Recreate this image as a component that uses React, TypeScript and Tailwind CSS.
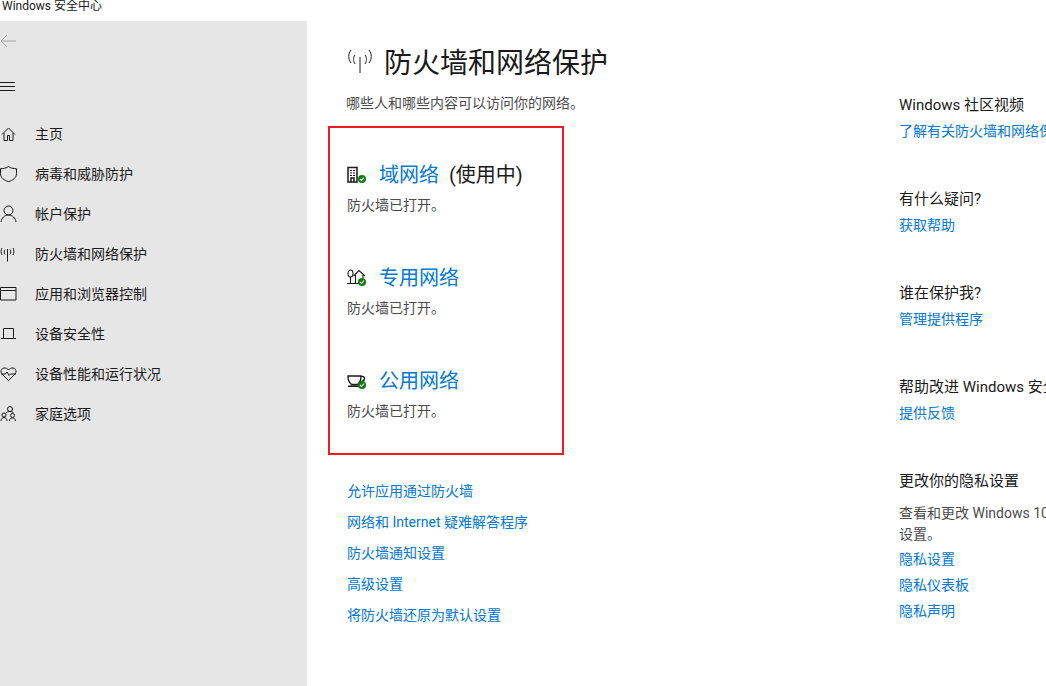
import React from "react";

const navItems = [
  { label: "主页", icon: "home" },
  { label: "病毒和威胁防护", icon: "shield" },
  { label: "帐户保护", icon: "user" },
  { label: "防火墙和网络保护", icon: "antenna" },
  { label: "应用和浏览器控制", icon: "browser" },
  { label: "设备安全性", icon: "laptop" },
  { label: "设备性能和运行状况", icon: "heart" },
  { label: "家庭选项", icon: "family" },
];

function NavIcon({ name }: { name: string }) {
  const common = {
    width: 18,
    height: 18,
    viewBox: "0 0 18 18",
    fill: "none",
    stroke: "#1a1a1a",
    strokeWidth: 1,
  };
  if (name === "home")
    return (
      <svg {...common}>
        <path d="M2 9.500 8.500 3l6.500 6.500M4 8v7.500h3.500V10.500h2v5H13V8" />
      </svg>
    );
  if (name === "shield")
    return (
      <svg {...common}>
        <path d="M8.500 1.500c2 1.600 5 2.200 8 2.200v5c0 4-3.500 6.500-8 8-4.500-1.500-8-4-8-8v-5c3 0 6-.6 8-2.200Z" />
      </svg>
    );
  if (name === "user")
    return (
      <svg {...common}>
        <circle cx="8.500" cy="5.500" r="4.500" />
        <path d="M1 17c.5-4 3.500-7 7.500-7s7 3 7.500 7" />
      </svg>
    );
  if (name === "antenna")
    return (
      <svg {...common}>
        <path d="M7.500 4v12.500M5 4.500c-1 1.500-1 3.500 0 5M10 4.500c1 1.500 1 3.500 0 5M2 3C.8 5 .8 8 2 10M13 3c1.200 2 1.200 5 0 7" />
      </svg>
    );
  if (name === "browser")
    return (
      <svg {...common}>
        <path d="M.5 2.500h15.500v12.500H.5ZM.5 5.500h15.500" />
      </svg>
    );
  if (name === "laptop")
    return (
      <svg {...common}>
        <path d="M3.500 13V3.500h10V13M1 13.500h15" />
      </svg>
    );
  if (name === "heart")
    return (
      <svg {...common}>
        <path d="M8.500 15.500 2 9C.2 7 .8 3.500 4 3c2-.3 3.500.8 4.500 2C9.500 3.800 11 2.700 13 3c3.200.5 3.800 4 2 6l-6.500 6.500Z" />
        <path d="M1 9h4.500l1.500-2 2 3.500 1.500-1.500H16" />
      </svg>
    );
  return (
    <svg {...common}>
      <circle cx="10" cy="4" r="2.500" />
      <circle cx="4" cy="10" r="2" />
      <circle cx="12.500" cy="10.500" r="2" />
      <path d="M1 16c0-2 1.200-3.500 3-3.500s3 1.500 3 3.500M9.500 16c0-2 1.200-3 3-3s3 1 3 3M6 8c.6-1 2.500-1.500 4-1.500s3 .5 3.500 1.500" />
    </svg>
  );
}

// small green tick badge used on the three network icons
function Tick() {
  return (
    <g>
      <circle cx="15" cy="14" r="4" fill="#107c10" stroke="none" />
      <path d="M13 14l1.500 1.500 2.500-2.800" fill="none" stroke="#fff" strokeWidth="1.100" />
    </g>
  );
}

function NetworkIcon({ kind }: { kind: string }) {
  return (
    <svg width="20" height="20" viewBox="0 0 20 20" fill="none" stroke="#1a1a1a" strokeWidth="1.100">
      {kind === "domain" && (
        <>
          <path d="M1 2.500h9v14.500H1ZM4 17v-4h3v4" strokeWidth="1.500" />
          <path d="M3 5.500h5M3 8h5M3 10.500h5" strokeDasharray="2 1" />
        </>
      )}
      {kind === "private" && (
        <>
          <ellipse cx="3.500" cy="5.500" rx="2.500" ry="3.500" />
          <path d="M3.500 9v6M0 15.500h13" />
          <path d="M6.500 8 12 2.500 18 8M8.500 7v8M16 7v3" />
        </>
      )}
      {kind === "public" && (
        <>
          <path
            d="M1 5h13c0 4-1.500 7-3.500 8.500h-6C2.500 12 1 9 1 5ZM14 5.500c2-.5 4 .5 3.500 2.500s-1.500 2.500-3.500 2.800M1 15.200h11"
            strokeWidth="1.400"
          />
        </>
      )}
      <Tick />
    </svg>
  );
}

function Network({ kind, name, extra }: { kind: string; name: string; extra?: string }) {
  return (
    <div className="h-[103px] flex flex-col">
      <div className="flex items-center h-[30px]">
        <div className="w-[32px]">
          <NetworkIcon kind={kind} />
        </div>
        <a className="text-[20px] text-[#0078d7]">{name}</a>
        {extra && <span className="text-[20px] text-[#1a1a1a] ml-[10px]">{extra}</span>}
      </div>
      <p className="text-[14px] text-[#4c4c4c] mt-[5px] leading-[20px]">防火墙已打开。</p>
    </div>
  );
}

function SideBlock({ title, link }: { title: string; link: string }) {
  return (
    <div className="h-[94px]">
      <h3 className="text-[15px] text-[#1a1a1a] leading-[20px] whitespace-nowrap">{title}</h3>
      <a className="block text-[14px] text-[#0078d7] leading-[20px] mt-[6px] whitespace-nowrap">{link}</a>
    </div>
  );
}

export default function App() {
  const font = "font-['Roboto','Noto_Sans_CJK_SC',sans-serif]";
  return (
    <div className={`w-[1046px] h-[686px] bg-white overflow-hidden flex flex-col ${font}`}>
      <div className="h-[21px] shrink-0 pl-[2px] text-[12px] leading-[13px] text-[#1a1a1a]">Windows 安全中心</div>
      <div className="flex flex-1 min-h-0">
        <aside className="w-[307px] shrink-0 bg-[#e6e6e6]">
          <div className="h-[40px] flex items-center">
            <svg width="18" height="14" viewBox="0 0 18 14" fill="none" stroke="#a6a6a6" strokeWidth="1">
              <path d="M16 7H1M7 1 1 7l6 6" />
            </svg>
          </div>
          <div className="h-[40px] mt-[5px] flex flex-col justify-center gap-[3px]">
            <div className="h-px w-[15px] bg-[#1a1a1a]" />
            <div className="h-px w-[15px] bg-[#1a1a1a]" />
            <div className="h-px w-[15px] bg-[#1a1a1a]" />
          </div>
          <nav className="mt-[8px]">
            {navItems.map((item) => (
              <div key={item.label} className="h-[40px] flex items-center">
                <div className="w-[35px]">
                  <NavIcon name={item.icon} />
                </div>
                <span className="text-[14px] text-[#1a1a1a]">{item.label}</span>
              </div>
            ))}
          </nav>
        </aside>

        <main className="flex flex-1 min-w-0">
          <section className="w-[592px] shrink-0 pl-[40px]">
            <div className="flex items-center h-[40px] mt-[21px]">
              <svg width="37" height="26" viewBox="0 0 37 26" fill="none" stroke="#1a1a1a" strokeWidth="1">
                <path d="M13 8v16M8 6c-2 3-2 6 0 9M18 6c2 3 2 6 0 9M4 1C1 5 1 10 4 14M22 1c3 4 3 9 0 13" />
              </svg>
              <h1 className="text-[28px] text-[#1a1a1a] pt-[3px]">防火墙和网络保护</h1>
            </div>
            <p className="text-[14px] text-[#4c4c4c] leading-[20px] mt-[11px] -ml-px">哪些人和哪些内容可以访问你的网络。</p>

            <div className="w-[236px] h-[329px] border-2 border-[#ed1c24] -ml-[19px] mt-[13px] pl-[17px] pt-[32px]">
              <Network kind="domain" name="域网络" extra="(使用中)" />
              <Network kind="private" name="专用网络" />
              <Network kind="public" name="公用网络" />
            </div>

            <div className="mt-[26px] flex flex-col gap-[11px]">
              <a className="text-[14px] leading-[20px] text-[#0078d7]">允许应用通过防火墙</a>
              <a className="text-[14px] leading-[20px] text-[#0078d7]">网络和 Internet 疑难解答程序</a>
              <a className="text-[14px] leading-[20px] text-[#0078d7]">防火墙通知设置</a>
              <a className="text-[14px] leading-[20px] text-[#0078d7]">高级设置</a>
              <a className="text-[14px] leading-[20px] text-[#0078d7]">将防火墙还原为默认设置</a>
            </div>
          </section>

          <section className="w-[260px] shrink-0 pt-[74px]">
            <SideBlock title="Windows 社区视频" link="了解有关防火墙和网络保护的更多信息" />
            <SideBlock title="有什么疑问?" link="获取帮助" />
            <SideBlock title="谁在保护我?" link="管理提供程序" />
            <SideBlock title="帮助改进 Windows 安全中心" link="提供反馈" />
            <h3 className="text-[15px] text-[#1a1a1a] leading-[20px]">更改你的隐私设置</h3>
            <p className="text-[14px] text-[#4c4c4c] leading-[21px] mt-[12px] whitespace-nowrap">
              查看和更改 Windows 10 设备的隐私
              <br />
              设置。
            </p>
            <div className="mt-[4px] flex flex-col gap-[6px]">
              <a className="text-[14px] leading-[20px] text-[#0078d7]">隐私设置</a>
              <a className="text-[14px] leading-[20px] text-[#0078d7]">隐私仪表板</a>
              <a className="text-[14px] leading-[20px] text-[#0078d7]">隐私声明</a>
            </div>
          </section>
        </main>
      </div>
    </div>
  );
}
